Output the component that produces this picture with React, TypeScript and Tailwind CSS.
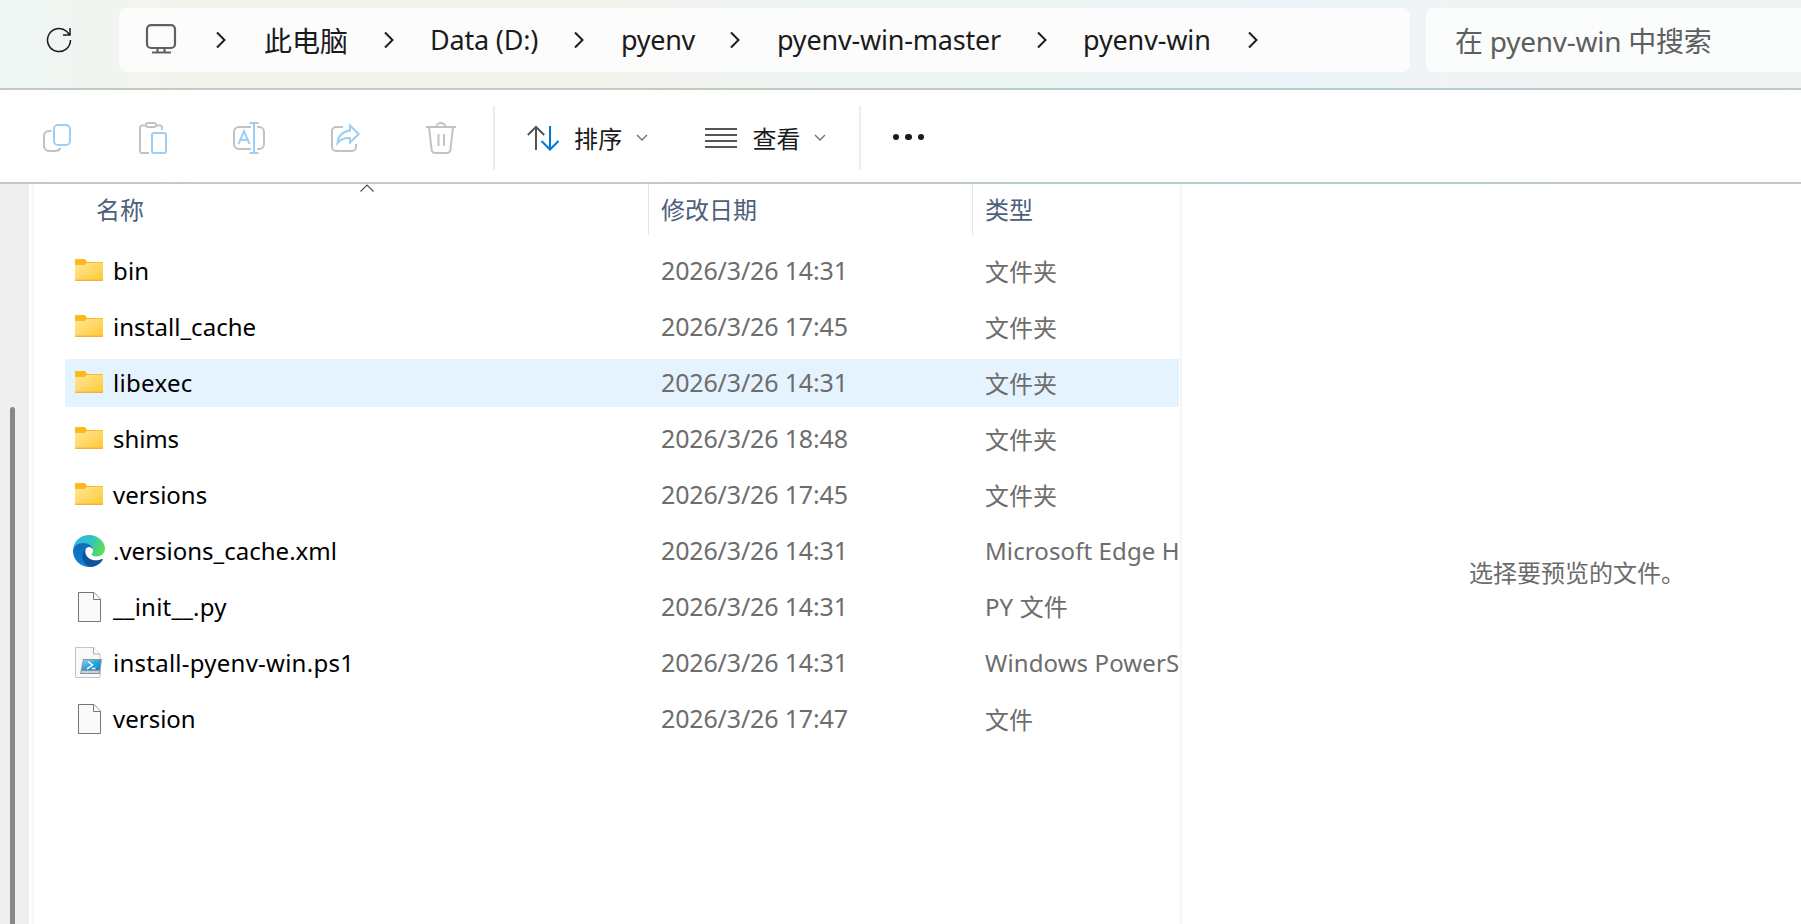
import React from 'react';

type IconKind = 'folder' | 'edge' | 'file' | 'ps1';

interface Entry {
  name: string;
  date: string;
  type: string;
  icon: IconKind;
  tracking: string; // letter spacing of the name
  selected?: boolean;
}

const entries: Entry[] = [
  { name: 'bin', date: '2026/3/26 14:31', type: '文件夹', icon: 'folder', tracking: 'tracking-[0.15px]' },
  { name: 'install_cache', date: '2026/3/26 17:45', type: '文件夹', icon: 'folder', tracking: 'tracking-[0.05px]' },
  { name: 'libexec', date: '2026/3/26 14:31', type: '文件夹', icon: 'folder', tracking: 'tracking-[0.3px]', selected: true },
  { name: 'shims', date: '2026/3/26 18:48', type: '文件夹', icon: 'folder', tracking: 'tracking-[-0.1px]' },
  { name: 'versions', date: '2026/3/26 17:45', type: '文件夹', icon: 'folder', tracking: 'tracking-[0px]' },
  { name: '.versions_cache.xml', date: '2026/3/26 14:31', type: 'Microsoft Edge H', icon: 'edge', tracking: 'tracking-[0px]' },
  { name: '__init__.py', date: '2026/3/26 14:31', type: 'PY 文件', icon: 'file', tracking: 'tracking-[0.2px]' },
  { name: 'install-pyenv-win.ps1', date: '2026/3/26 14:31', type: 'Windows PowerS', icon: 'ps1', tracking: 'tracking-[0.25px]' },
  { name: 'version', date: '2026/3/26 17:47', type: '文件', icon: 'file', tracking: 'tracking-[0px]' },
];

// Each crumb is followed by a chevron
const crumbs = [
  { label: '此电脑', box: 'ml-[37px] w-[83px] text-[28px] pt-0.5' },
  { label: 'Data (D:)', box: 'ml-[35px] w-[107px] text-[27px] tracking-[-0.2px]' },
  { label: 'pyenv', box: 'ml-[36px] w-[72px] text-[27px] tracking-[-0.3px]' },
  { label: 'pyenv-win-master', box: 'ml-[36px] w-[223px] text-[27px] tracking-[-0.2px]' },
  { label: 'pyenv-win', box: 'ml-[35px] w-[128px] text-[27px] tracking-[-0.15px]' },
];

const Chevron = () => (
  <svg className="h-5 w-3 shrink-0" viewBox="0 0 12 20" fill="none" stroke="#1b1b1b" strokeWidth="2">
    <path d="M2 2.500l7.500 7.500L2 17.500" />
  </svg>
);

const SmallChevron = () => (
  <svg className="ml-[13px] h-3 w-3 shrink-0" viewBox="0 0 12 12" fill="none" stroke="#707070" strokeWidth="1.400">
    <path d="M1 3l5 5 5-5" />
  </svg>
);

const Separator = () => <div className="h-16 w-0.5 shrink-0 bg-[#ededed]" />;

// Thin accent line under the address bar and the toolbar
const AccentLine = () => (
  <div className="h-0.5 shrink-0 bg-[linear-gradient(90deg,#bfcdc5_0%,#c8ccbc_12%,#c8ccbc_34%,#bccbc6_52%,#b5cdd5_68%,#bccbcd_85%,#c0cbcb_100%)]" />
);

const EntryIcon = ({ kind }: { kind: IconKind }) => {
  if (kind === 'folder') {
    return (
      <svg className="h-8 w-8 shrink-0" viewBox="0 0 32 32">
        <defs>
          <linearGradient id="folder" x1="0" y1="0" x2="1" y2="1">
            <stop offset="0" stopColor="#ffe69a" />
            <stop offset="1" stopColor="#ffc933" />
          </linearGradient>
        </defs>
        <path d="M2 5a1 1 0 011-1h8q1.200 0 1.800 1l1.200 2H29a1 1 0 011 1v4H2z" fill="#fbb91c" />
        <path d="M2 10h9q1.300 0 2-1.200L13.800 8H30v17a.8.8 0 01-.8.8H2.800A.8.8 0 012 25z" fill="url(#folder)" />
        <path d="M2 24.800h28q0 1-.8 1H2.800q-.8 0-.8-1z" fill="#e9a520" />
      </svg>
    );
  }
  if (kind === 'edge') {
    return (
      <svg className="h-8 w-8 shrink-0" viewBox="0 0 32 32">
        <defs>
          <linearGradient id="edgeTop" x1="0" y1="0.300" x2="1" y2="0.600">
            <stop offset="0" stopColor="#2fb4ee" />
            <stop offset="0.500" stopColor="#30c4c0" />
            <stop offset="1" stopColor="#62de50" />
          </linearGradient>
          <linearGradient id="edgeLeft" x1="0" y1="0" x2="0.300" y2="1">
            <stop offset="0" stopColor="#1168b4" />
            <stop offset="1" stopColor="#0a84dc" />
          </linearGradient>
        </defs>
        <path d="M.3 13C1.500 5.500 8 0 16 0c9 0 16 6.500 16 13.500 0 5-3.800 8-8.300 8-3.500 0-5-1.200-5-2.200 0-.8 1.300-1.300 1.300-3.600C20 12 16.500 8.500 11 8.500 5.500 8.500 1.500 11 .3 13z" fill="url(#edgeTop)" />
        <path d="M0 16C0 11 4.500 8 10.500 8c5.500 0 9 3 9.500 6.500-.8-1.800-2.500-2.600-4-2.600-2.200 0-4 2.200-4 5.100 0 7 6 12 12 11.500L23 30.400A16 16 0 010 16z" fill="url(#edgeLeft)" />
        <path d="M12.800 14c-2.500 2-3.800 5-3.300 8.500.6 4.800 4 9 8.500 9.300 5 0 9.500-3 11.700-7 .3-.7-.2-1.100-.8-.8-7 3.500-16.600 0-16.600-7.500 0-.9.200-1.700.5-2.500z" fill="#0f539d" />
      </svg>
    );
  }
  if (kind === 'ps1') {
    return (
      <svg className="h-8 w-8 shrink-0" viewBox="0 0 32 32">
        <defs>
          <linearGradient id="psScreen" x1="0" y1="0" x2="1" y2="1">
            <stop offset="0" stopColor="#8fd6f3" />
            <stop offset="0.500" stopColor="#2aa5da" />
            <stop offset="1" stopColor="#1480bd" />
          </linearGradient>
        </defs>
        <path d="M2.500.5H20.500l6.500 6.500v23.500h-24.500z" fill="#fafafa" stroke="#c4c4c4" />
        <path d="M20.500.5V7H27" fill="#fff" stroke="#a8a8a8" />
        <path d="M10 12h19L27 27H7z" fill="#8796a3" />
        <path d="M10.800 13h17.200l-1.600 10H8.800z" fill="url(#psScreen)" />
        <path d="M15 14.500l4.500 3.500-5.500 3.800M19 21.500h3.500" fill="none" stroke="#fff" strokeWidth="1.500" />
        <path d="M8.500 24h17.700l-.3 2H8z" fill="#c9d2d9" />
      </svg>
    );
  }
  return (
    <svg className="h-8 w-8 shrink-0" viewBox="0 0 32 32" fill="#f9f9f9" stroke="#767676">
      <path d="M5.500 1.500H21l6.500 6.500v22.500h-22z" />
      <path d="M20.500 1.500V8.500h7" />
    </svg>
  );
};

const AddressBar = () => (
  <div className="flex h-[88px] shrink-0 items-center bg-[linear-gradient(90deg,#eff6f3_0%,#f3f4ee_12%,#f3f4ee_32%,#edf5f4_52%,#ecf5f7_72%,#f1f4f5_84%,#f0f4f3_100%)] pb-2">
    <svg className="ml-[46px] h-[26px] w-[26px] shrink-0" viewBox="0 0 26 26" fill="none" stroke="#1b1b1b" strokeWidth="1.500">
      <path d="M24.500 13A11.500 11.500 0 1 1 20.500 4.300L23.500 7.500M24 1V8H17" />
    </svg>
    <div className="ml-[47px] flex h-16 w-[1291px] shrink-0 items-center rounded-lg bg-[#fcfcfd] text-[#1b1b1b]">
      <svg className="ml-[26px] h-8 w-8 shrink-0" viewBox="0 0 32 32" fill="none" stroke="#606060" strokeWidth="2.200">
        <rect x="2" y="1.200" width="28" height="22.800" rx="4" />
        <path d="M12.500 24v4M19.500 24v4M7 28.500h19" />
      </svg>
      <div className="ml-[38px] flex">
        <Chevron />
      </div>
      {crumbs.map((crumb) => (
        <div key={crumb.label} className="flex items-center">
          <span className={`whitespace-nowrap leading-9 ${crumb.box}`}>{crumb.label}</span>
          <div className="ml-9 flex">
            <Chevron />
          </div>
        </div>
      ))}
    </div>
    <div className="ml-4 flex h-16 grow items-center rounded-l-lg bg-[#fbfcfc] pt-0.5 pl-[29px] text-[28px] tracking-[-0.25px] text-[#5d5f5e]">
      在 pyenv-win 中搜索
    </div>
  </div>
);

const Toolbar = () => (
  <div className="flex h-[92px] shrink-0 items-center pt-1 pl-[41px] text-2xl text-[#1b1b1b]">
    <div className="flex w-[452px] shrink-0 gap-16">
      {/* copy */}
      <svg className="h-8 w-8" viewBox="0 0 32 32" fill="none" strokeWidth="2">
        <path d="M10.500 9H8a5 5 0 00-5 5v10a5 5 0 005 5h6q4 0 5.500-3" stroke="#c2c2c2" />
        <rect x="13" y="3" width="16" height="20" rx="4" stroke="#9fcef2" />
      </svg>
      {/* paste */}
      <svg className="h-8 w-8" viewBox="0 0 32 32" fill="none" strokeWidth="2">
        <path d="M8.500 3.500H5a2 2 0 00-2 2V29a2 2 0 002 2h7M19.500 3.500H23a2 2 0 012 2V8" stroke="#c2c2c2" />
        <rect x="9" y="1" width="10" height="4" rx="2" stroke="#c2c2c2" />
        <rect x="15" y="11" width="14" height="20" rx="2" stroke="#9fcef2" />
      </svg>
      {/* rename */}
      <svg className="h-8 w-8" viewBox="0 0 32 32" fill="none" strokeWidth="2">
        <path d="M18 5H6a5 5 0 00-5 5v12a5 5 0 005 5h12M24 5h2a5 5 0 015 5v12a5 5 0 01-5 5h-2" stroke="#c2c2c2" />
        <path d="M21 1v30M16.500 1h9M16.500 31h9M5.500 22l5.500-13 5.500 13M7.500 18h7" stroke="#9fcef2" />
      </svg>
      {/* share */}
      <svg className="h-8 w-8" viewBox="0 0 32 32" fill="none" strokeWidth="2">
        <path d="M14 5H7a4 4 0 00-4 4v16a4 4 0 004 4h16a4 4 0 004-4v-3" stroke="#c2c2c2" />
        <path d="M21 3.500l8.700 8.500L21 20.500V16q-8-.5-12.500 5Q9.500 10 21 8.500z" stroke="#9fcef2" />
      </svg>
      {/* delete */}
      <svg className="h-8 w-8" viewBox="0 0 32 32" fill="none" stroke="#c2c2c2" strokeWidth="2">
        <path d="M1 5h30M11.500 5a4.500 4 0 019 0M4 5l2.600 22.500a3.500 3.500 0 003.500 3.500h11.800a3.500 3.500 0 003.500-3.500L28 5M13.500 12v12M19 12v12" />
      </svg>
    </div>
    <Separator />
    <svg className="ml-8 h-8 w-8 shrink-0" viewBox="0 0 32 32" fill="none" strokeWidth="2">
      <path d="M9 28V5M.8 13L9 4.800l8.200 8.200" stroke="#555" />
      <path d="M23 4v23M14.500 19l8.500 8.500 8.500-8.500" stroke="#0078d4" />
    </svg>
    <span className="ml-[15px] pt-0.5 tracking-[0.3px]">排序</span>
    <SmallChevron />
    <svg className="ml-[57px] h-8 w-8 shrink-0" viewBox="0 0 32 32" stroke="#555" strokeWidth="2">
      <path d="M0 7h32M0 13h32M0 19h32M0 25h32" />
    </svg>
    <span className="ml-4 pt-0.5">查看</span>
    <SmallChevron />
    <div className="ml-[33px] flex">
      <Separator />
    </div>
    <div className="ml-8 flex gap-[6px] pb-0.5">
      <span className="h-[6.5px] w-[6.5px] rounded-full bg-[#1b1b1b]" />
      <span className="h-[6.5px] w-[6.5px] rounded-full bg-[#1b1b1b]" />
      <span className="h-[6.5px] w-[6.5px] rounded-full bg-[#1b1b1b]" />
    </div>
  </div>
);

const FileList = () => (
  <div className="flex w-[1148px] shrink-0 flex-col border-r-2 border-[#f5f5f5] pl-[31px]">
    <div className="flex h-[51px] text-2xl text-[#4c607a]">
      <div className="relative flex w-[584px] items-center border-r border-[#e3e3e3] pl-[31px]">
        名称
        {/* sort direction mark */}
        <svg className="absolute top-0 left-[295px] h-2 w-[14px]" viewBox="0 0 14 8" fill="none" stroke="#555" strokeWidth="1.200">
          <path d="M.5 7.500L7 1l6.500 6.500" />
        </svg>
      </div>
      <div className="flex w-[324px] items-center border-r border-[#e3e3e3] pl-3">修改日期</div>
      <div className="flex items-center pl-3">类型</div>
    </div>
    <div className="mt-3 flex flex-col gap-2">
      {entries.map((entry) => (
        <div
          key={entry.name}
          className={`flex h-12 w-[1114px] items-center rounded-l-xs pl-2 text-2xl ${entry.selected ? 'bg-[#e5f3ff]' : ''}`}
        >
          <EntryIcon kind={entry.icon} />
          <span className={`ml-2 w-[548px] shrink-0 text-black ${entry.tracking}`}>{entry.name}</span>
          <span className="w-[324px] shrink-0 text-[25px] tracking-[-0.15px] text-[#6d6d6d]">{entry.date}</span>
          <span className={`whitespace-nowrap text-[#6d6d6d] ${entry.type.startsWith('文件') ? 'pt-0.5' : 'tracking-[0.1px]'}`}>
            {entry.type}
          </span>
        </div>
      ))}
    </div>
  </div>
);

export default function App() {
  return (
    <div className="flex h-screen w-full flex-col overflow-hidden bg-white font-['Noto_Sans','Noto_Sans_CJK_SC',sans-serif]">
      <AddressBar />
      <AccentLine />
      <Toolbar />
      <AccentLine />
      <div className="flex min-h-0 grow">
        {/* navigation pane edge with its scrollbar */}
        <div className="flex w-[29px] shrink-0 bg-[#efefef] pt-[223px] pl-[10px]">
          <div className="w-[5px] rounded-t-full bg-[#878787]" />
        </div>
        <div className="ml-[3px] w-0.5 shrink-0 bg-[#f7f7f7]" />
        <FileList />
        <div className="flex grow items-center pt-[38px] pl-[287px] text-2xl whitespace-nowrap text-[#6b6b6b]">选择要预览的文件。</div>
      </div>
    </div>
  );
}
